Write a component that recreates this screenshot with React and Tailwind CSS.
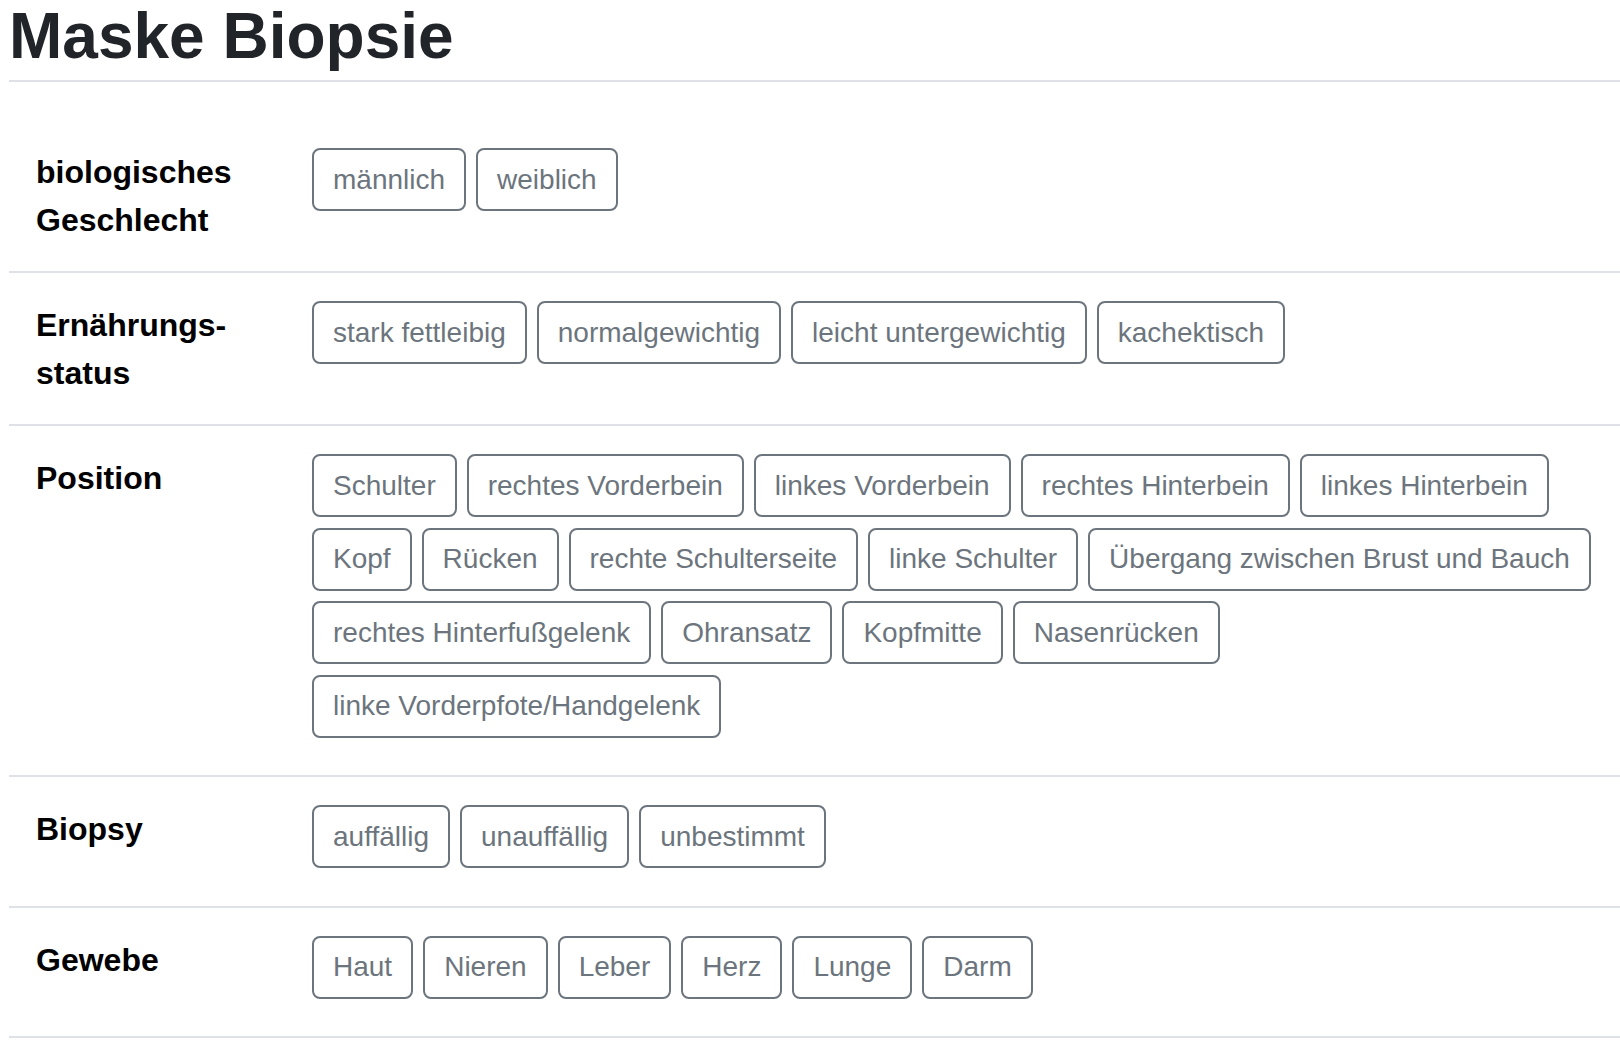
const SECTIONS = [
  { label: 'biologisches Geschlecht', options: ['männlich', 'weiblich'] },
  {
    label: 'Ernährungs\u00ADstatus',
    options: ['stark fettleibig', 'normalgewichtig', 'leicht untergewichtig', 'kachektisch'],
  },
  {
    label: 'Position',
    options: [
      'Schulter',
      'rechtes Vorderbein',
      'linkes Vorderbein',
      'rechtes Hinterbein',
      'linkes Hinterbein',
      'Kopf',
      'Rücken',
      'rechte Schulterseite',
      'linke Schulter',
      'Übergang zwischen Brust und Bauch',
      'rechtes Hinterfußgelenk',
      'Ohransatz',
      'Kopfmitte',
      'Nasenrücken',
      'linke Vorderpfote/Handgelenk',
    ],
  },
  { label: 'Biopsy', options: ['auffällig', 'unauffällig', 'unbestimmt'] },
  { label: 'Gewebe', options: ['Haut', 'Nieren', 'Leber', 'Herz', 'Lunge', 'Darm'] },
];

function OptionButton({ children }) {
  return (
    <button
      type="button"
      className="mb-[10.5px] mr-[10px] flex h-[63px] items-center rounded-lg border-2 border-[#6c757d] bg-white px-[19px] text-[28px] text-[#6c757d]"
    >
      {children}
    </button>
  );
}

function SectionRow({ label, options, first }) {
  return (
    <div
      className={`flex border-t-2 pb-[27px] pt-[28px] ${first ? 'border-transparent' : 'border-[#dee2e6]'}`}
    >
      <div className="w-[303px] shrink-0 pl-[27px] pr-[28px] text-[32px] font-bold leading-[48px] text-black">
        {label}
      </div>
      <div className="flex flex-1 flex-wrap">
        {options.map((option) => (
          <OptionButton key={option}>{option}</OptionButton>
        ))}
      </div>
    </div>
  );
}

export default function App() {
  return (
    <div
      className="min-h-screen bg-white pl-[9px]"
      style={{ fontFamily: '"Liberation Sans", Arial, sans-serif' }}
    >
      <h1 className="text-[64px] font-bold leading-[72px] text-[#212529]">Maske Biopsie</h1>
      <div className="mt-[8px] h-[2px] bg-[#dee2e6]" />

      <div className="mt-[36px] border-b-2 border-[#dee2e6]">
        {SECTIONS.map((section, i) => (
          <SectionRow key={section.label} {...section} first={i === 0} />
        ))}
      </div>
    </div>
  );
}
